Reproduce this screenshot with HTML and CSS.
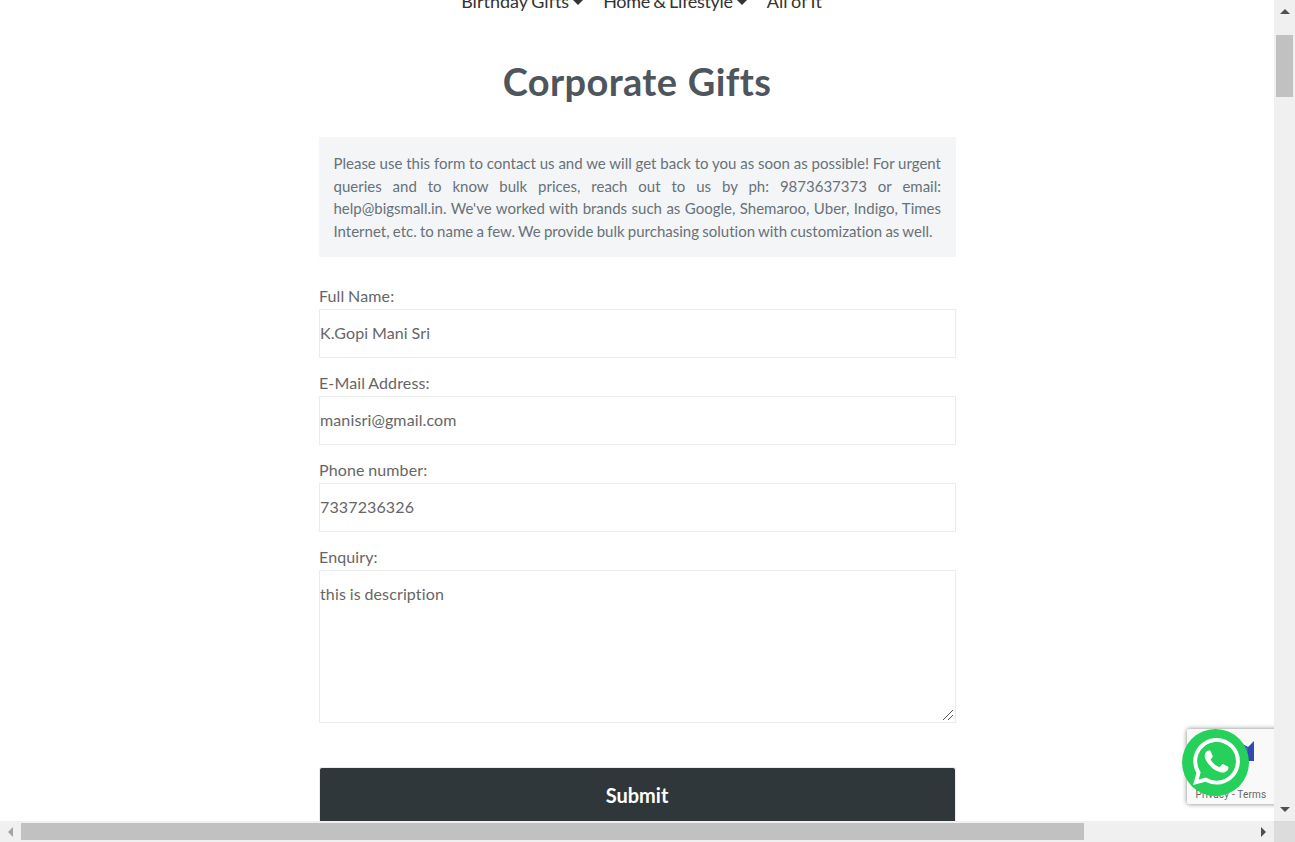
FILE: index.html
```html
<!DOCTYPE html>
<html lang="en">
<head>
<meta charset="utf-8">
<title>Corporate Gifts</title>
<link rel="stylesheet" href="styles.css">
</head>
<body>
<div class="window">
  <main class="page">
    <nav class="nav">
      <span class="nav-item">Birthday Gifts<i class="caret"></i></span>
      <span class="nav-item tight">Home &amp; Lifestyle<i class="caret"></i></span>
      <span class="nav-item">All of It</span>
    </nav>
    <h1 class="title">Corporate Gifts</h1>
    <div class="content">
      <p class="intro">
        <span class="line">Please use this form to contact us and we will get back to you as soon as possible! For urgent</span>
        <span class="line">queries and to know bulk prices, reach out to us by ph: 9873637373 or email:</span>
        <span class="line">help@bigsmall.in. We've worked with brands such as Google, Shemaroo, Uber, Indigo, Times</span>
        <span class="line last">Internet, etc. to name a few. We provide bulk purchasing solution with customization as well.</span>
      </p>
      <form class="form">
        <label class="label" for="name">Full Name:</label>
        <input class="field" id="name" value="K.Gopi Mani Sri">
        <label class="label" for="email">E-Mail Address:</label>
        <input class="field" id="email" value="manisri@gmail.com">
        <label class="label" for="phone">Phone number:</label>
        <input class="field" id="phone" value="7337236326">
        <label class="label" for="enquiry">Enquiry:</label>
        <div class="area-wrap">
          <textarea class="field area" id="enquiry">this is description</textarea>
          <svg class="grip" width="11" height="11" viewBox="0 0 11 11" shape-rendering="crispEdges"><path d="M0.5 10.5L10.5 0.5M5.5 10.5L10.5 5.5"/></svg>
        </div>
        <button class="submit" type="button">Submit</button>
      </form>
    </div>
    <div class="captcha">
      <svg class="captcha-mark" width="20" height="22" viewBox="0 0 20 22"><path d="M0 0l14 7 6-6v20H0z" fill="#3349ae"/><path d="M0 0l14 7v14H0z" fill="#3f5bc4"/></svg>
      <span class="captcha-links">Privacy - Terms</span>
    </div>
    <div class="whatsapp">
      <svg width="47" height="47" viewBox="0 0 24 24" fill="#fff"><path d="M17.472 14.382c-.297-.149-1.758-.867-2.03-.967-.273-.099-.471-.148-.67.15-.197.297-.767.966-.94 1.164-.173.199-.347.223-.644.075-.297-.15-1.255-.463-2.39-1.475-.883-.788-1.48-1.761-1.653-2.059-.173-.297-.018-.458.13-.606.134-.133.298-.347.446-.52.149-.174.198-.298.298-.497.099-.198.05-.371-.025-.52-.075-.149-.669-1.612-.916-2.207-.242-.579-.487-.5-.669-.51-.173-.008-.371-.01-.57-.01-.198 0-.52.074-.792.372-.272.297-1.04 1.016-1.04 2.479 0 1.462 1.065 2.875 1.213 3.074.149.198 2.096 3.2 5.077 4.487.709.306 1.262.489 1.694.625.712.227 1.36.195 1.871.118.571-.085 1.758-.719 2.006-1.413.248-.694.248-1.289.173-1.413-.074-.124-.272-.198-.57-.347m-5.421 7.403h-.004a9.87 9.87 0 01-5.031-1.378l-.361-.214-3.741.982.998-3.648-.235-.374a9.86 9.86 0 01-1.51-5.26c.001-5.45 4.436-9.884 9.888-9.884 2.64 0 5.122 1.03 6.988 2.898a9.825 9.825 0 012.893 6.994c-.003 5.45-4.437 9.884-9.885 9.884m8.413-18.297A11.815 11.815 0 0012.05 0C5.495 0 .16 5.335.157 11.892c0 2.096.547 4.142 1.588 5.945L.057 24l6.305-1.654a11.882 11.882 0 005.683 1.448h.005c6.554 0 11.89-5.335 11.893-11.893a11.821 11.821 0 00-3.48-8.413z"/></svg>
    </div>
  </main>
  <div class="vbar">
    <i class="arrow up"></i>
    <i class="vthumb"></i>
    <i class="arrow down"></i>
  </div>
  <div class="hbar">
    <i class="arrow left"></i>
    <i class="hthumb"></i>
    <i class="arrow right"></i>
  </div>
  <div class="corner"></div>
</div>
</body>
</html>
```
FILE: styles.css
```css
* { box-sizing: border-box; }
body { margin: 0; overflow: hidden; background: #fff; font-family: Lato, sans-serif; font-variant-ligatures: none; }
.window { display: grid; grid-template: 821px 21px / 1274px 21px; width: 1295px; height: 842px; overflow: hidden; }
.page { position: relative; overflow: hidden; height: 821px; }

.nav { display: flex; justify-content: center; gap: 20px; height: 24px; margin: -11px 0 0 9px; font-size: 18px; line-height: 24px; word-spacing: -1px; color: #333; white-space: nowrap; }
.nav-item { display: flex; align-items: center; }
.tight { letter-spacing: -.3px; }
.caret { margin: 3px 0 0 4px; border: 5px solid transparent; border-top-color: #333; border-bottom: 0; }

.title { margin: 45px 0 0; height: 48px; font-size: 38px; line-height: 47px; font-weight: 700; letter-spacing: .35px; word-spacing: 1px; text-align: center; color: #4d565c; }
.content { width: 637px; margin: 31px 0 0 319px; }
.intro { margin: 0 0 29px; height: 120px; padding: 15px 15px 0 14.5px; background: #f4f5f7; color: #677279; font-size: 15px; line-height: 22.5px; }
.line { display: block; white-space: normal; word-spacing: -1.6px; text-align: justify; text-align-last: justify; }
.last { width: 599px; }

.form { display: flex; flex-direction: column; font-variant-ligatures: none; }
.label { height: 23px; font-size: 16px; line-height: 19px; letter-spacing: .12px; word-spacing: -.5px; color: #666; }
.field { display: block; width: 100%; height: 49px; margin: 0 0 15px; padding: 0 0 2px; border: 1px solid #ebebeb; border-radius: 0; outline: 0; background: #fff; font: 16px/20px Lato, sans-serif; font-variant-ligatures: none; letter-spacing: .13px; word-spacing: -.5px; color: #666; }
.area-wrap { position: relative; height: 153px; margin-bottom: 45px; }
.area { height: 153px; padding-top: 13px; resize: none; overflow: hidden; }
.grip { position: absolute; right: 3px; bottom: 2px; stroke: #555; fill: none; }
.submit { height: 60px; margin: 0 1px; padding: 0 1px 6px 0; border: 0; border-radius: 2px; box-shadow: 0 0 0 1px #ebebeb; background: #30373b; color: #fff; font: 700 20px/24px Lato, sans-serif; }

.captcha { position: absolute; left: 1187px; top: 729px; width: 256px; height: 75px; border-radius: 2px; background: #f9f9f9; box-shadow: 0 0 5px gray; }
.captcha-mark { position: absolute; left: 47px; top: 11px; }
.captcha-links { position: absolute; left: 8.5px; top: 59px; font: 10px/14px Roboto, sans-serif; letter-spacing: .2px; color: #666; white-space: nowrap; }
.whatsapp { position: absolute; left: 1182px; top: 729px; width: 67px; height: 67px; display: flex; align-items: center; justify-content: center; padding: 0 0 2px 2px; border-radius: 50%; background: #25d15b; }

.vbar { display: flex; flex-direction: column; align-items: center; background: #f0f0f0; padding: 9px 0; }
.vthumb { width: 17px; height: 62px; margin-top: 21px; background: #c1c1c1; }
.hbar { display: flex; align-items: center; background: #f0f0f0; padding: 0 8px; }
.hthumb { width: 1063px; height: 17px; margin-left: 8px; background: #c1c1c1; }
.corner { background: #dcdcdc; }
.arrow { border: 5px solid transparent; }
.up { border-top: 0; border-bottom-color: #505050; }
.down { margin-top: auto; border-bottom: 0; border-top-color: #505050; }
.left { border-left: 0; border-right-color: #a3a3a3; }
.right { margin-left: auto; border-right: 0; border-left-color: #505050; }
```
